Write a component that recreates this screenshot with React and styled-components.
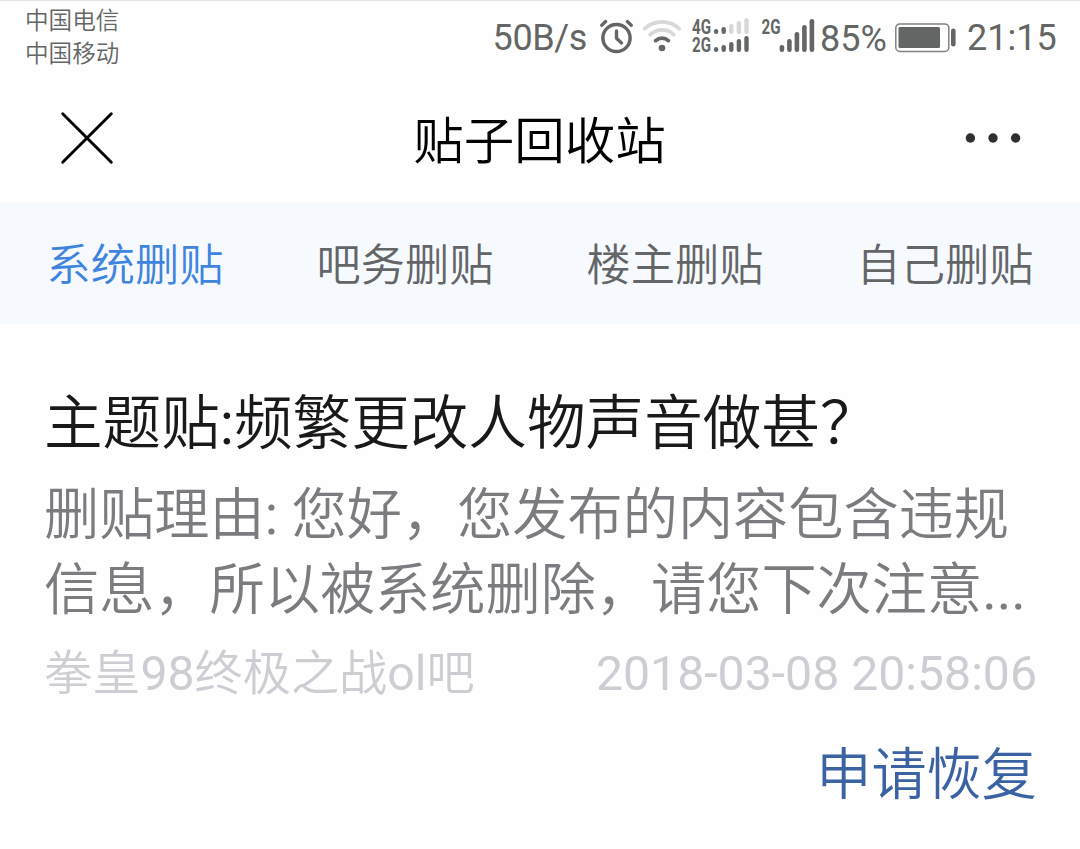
import React, { useState } from 'react'
import styled, { createGlobalStyle } from 'styled-components'

const tabs = ['系统删贴', '吧务删贴', '楼主删贴', '自己删贴']

const posts = [
	{
		id: 1,
		title: '主题贴:频繁更改人物声音做甚？',
		reason: ['删贴理由: 您好，您发布的内容包含违规', '信息，所以被系统删除，请您下次注意...'],
		forum: '拳皇98终极之战ol吧',
		date: '2018-03-08 20:58:06',
	},
]

const AlarmIcon = () => (
	<svg width="34" height="36" viewBox="0 0 34 36" fill="none" stroke="#646665" strokeLinecap="round">
		<circle cx="16.5" cy="19" r="13.6" strokeWidth="3.5" />
		<path d="M16.5 12v7.3l5 4.6" strokeWidth="3.4" strokeLinejoin="round" />
		<path d="M1.7 6.2l4-3.6M31.3 6.2l-4-3.6" strokeWidth="3.4" />
	</svg>
)

const WifiIcon = () => (
	<svg width="40" height="36" viewBox="0 0 40 36" fill="none" strokeLinecap="round" strokeWidth="3.8">
		<path d="M2.8 9.6a25.5 25.5 0 0 1 34.4 0" stroke="#d8d8d8" />
		<path d="M8.3 15.6a17 17 0 0 1 23.4 0" stroke="#d8d8d8" />
		<path d="M13.7 21.6a9.3 9.3 0 0 1 12.6 0" stroke="#646665" />
		<circle cx="20" cy="29" r="3.3" fill="#646665" />
	</svg>
)

const Bars = ({ x, step, bottom, heights, lit = 5, width = 4.4 }) =>
	heights.map((height, i) => (
		<rect
			key={i}
			x={x + i * step}
			y={bottom - height}
			width={width}
			height={height}
			rx={width / 2}
			fill={i < lit ? '#646665' : '#d8d8d8'}
		/>
	))

const DualSignal = () => (
	<svg width="60" height="40" viewBox="0 0 60 40">
		<NetworkLabel x="1" y="16.5" textLength="19" lengthAdjust="spacingAndGlyphs">4G</NetworkLabel>
		<NetworkLabel x="1" y="34.5" textLength="19" lengthAdjust="spacingAndGlyphs">2G</NetworkLabel>
		<Bars x={22.9} step={7.6} bottom={17} heights={[5, 7, 10, 13, 16]} lit={2} />
		<Bars x={22.9} step={7.6} bottom={35} heights={[5, 7, 10, 13, 16]} />
	</svg>
)

const SingleSignal = () => (
	<svg width="56" height="40" viewBox="0 0 56 40">
		<NetworkLabel x="0.5" y="16.5" textLength="19" lengthAdjust="spacingAndGlyphs">2G</NetworkLabel>
		<Bars x={18.6} step={7.5} bottom={35} heights={[7, 13, 20, 27, 33]} width={4.6} />
	</svg>
)

const BatteryIcon = () => (
	<svg width="62" height="30" viewBox="0 0 62 30">
		<rect x="0.8" y="0.9" width="53" height="27.6" rx="4" fill="none" stroke="#808281" strokeWidth="1.5" />
		<rect x="3.5" y="4" width="41.5" height="21" rx="1.5" fill="#646665" />
		<rect x="56" y="5.5" width="4.6" height="18" rx="2.2" fill="#646665" />
	</svg>
)

const CloseIcon = () => (
	<svg width="54" height="54" viewBox="0 0 54 54" stroke="#000" strokeWidth="2.9" strokeLinecap="round">
		<path d="M2.7 2.7l48.6 48.6M51.3 2.7L2.7 51.3" />
	</svg>
)

const MoreIcon = () => (
	<svg width="56" height="12" viewBox="0 0 56 12" fill="#303030">
		<circle cx="5.4" cy="6" r="4.7" />
		<circle cx="28" cy="6" r="4.7" />
		<circle cx="50.6" cy="6" r="4.7" />
	</svg>
)

// latin runs are set one step heavier than the chinese around them
const Mixed = ({ children }) =>
	children.split(/([\x21-\x7e]+)/).map((part, i) => i % 2 ? <Latin key={i}>{part}</Latin> : part)

export default function App() {
	const [active, setActive] = useState(0)

	return (
		<Page>
			<GlobalStyle />
			<StatusBar>
				<Carriers>
					<div>中国电信</div>
					<div>中国移动</div>
				</Carriers>
				<Indicators>
					<Speed>50B/s</Speed>
					<Slot left={0} raise={2.6}><AlarmIcon /></Slot>
					<Slot left={8} raise={2.6}><WifiIcon /></Slot>
					<Slot left={9} raise={2.6}><DualSignal /></Slot>
					<Slot left={10} raise={2.6}><SingleSignal /></Slot>
					<Slot left={3} lower={2}><StatusText width={75}>85%</StatusText></Slot>
					<BatteryIcon />
					<Slot left={10}><StatusText width={90}>21:15</StatusText></Slot>
				</Indicators>
			</StatusBar>
			<Header>
				<IconButton aria-label="关闭"><CloseIcon /></IconButton>
				<HeaderTitle>贴子回收站</HeaderTitle>
				<IconButton aria-label="更多"><MoreIcon /></IconButton>
			</Header>
			<TabBar>
				{tabs.map((tab, key) => (
					<Tab key={key} $active={key === active} onClick={() => setActive(key)}>{tab}</Tab>
				))}
			</TabBar>
			{posts.map((post) => (
				<Post key={post.id}>
					<PostTitle><Mixed>{post.title}</Mixed></PostTitle>
					<Reason>
						{post.reason.map((line, key) => <div key={key}><Mixed>{line}</Mixed></div>)}
					</Reason>
					<PostInfo>
						<span><Mixed>{post.forum}</Mixed></span>
						<Latin>{post.date}</Latin>
					</PostInfo>
					<RestoreButton>申请恢复</RestoreButton>
				</Post>
			))}
		</Page>
	)
}

const GlobalStyle = createGlobalStyle`
	* {
		box-sizing: border-box;
	}
	body {
		margin: 0;
		background: #fefefe;
		font-family: Roboto, 'Noto Sans CJK SC', sans-serif;
		font-weight: 350;
	}
	svg {
		display: block;
		flex: none;
		overflow: visible;
	}
	button {
		border: none;
		padding: 0;
		background: none;
		font-family: inherit;
		font-weight: inherit;
		cursor: pointer;
	}
`

const Page = styled.div`
	width: 1080px;
	height: 849px;
	overflow: hidden;
	border-top: 1px solid #e4e4e4;
	white-space: nowrap;
`

const Latin = styled.span`
	font-weight: 400;
`

const StatusBar = styled.div`
	display: flex;
	justify-content: space-between;
	height: 74px;
	padding: 4px 23px 0 25px;
	color: #646665;
`

const Carriers = styled.div`
	font-size: 23.6px;
	line-height: 33px;
`

const Indicators = styled.div`
	display: flex;
	align-items: center;
	height: 66px;
`

const Slot = styled.div`
	margin-left: ${props => props.left}px;
	padding-top: ${props => props.lower || 0}px;
	padding-bottom: ${props => props.raise || 0}px;
`

const StatusText = styled.div`
	width: ${props => props.width}px;
	font-size: 36px;
	font-weight: 400;
	line-height: 40px;
`

const Speed = styled(StatusText)`
	width: 107.5px;
	letter-spacing: -0.35px;
`

const NetworkLabel = styled.text`
	fill: #646665;
	font-size: 20px;
	font-weight: 700;
`

const Header = styled.div`
	display: flex;
	align-items: center;
	justify-content: space-between;
	height: 128px;
	padding: 0 59px 3px 60px;
`

const HeaderTitle = styled.div`
	padding: 9px 2px 0 0;
	color: #000;
	font-size: 50.5px;
	line-height: 60px;
`

const IconButton = styled.button`
	display: flex;
	align-items: center;
	width: 56px;
	height: 56px;
`

const TabBar = styled.div`
	display: grid;
	grid-template-columns: repeat(4, 1fr);
	height: 121px;
	padding-top: 5px;
	background: #f6faff;
`

const Tab = styled.button`
	color: ${props => props.$active ? '#3f84de' : '#646566'};
	font-size: 44.2px;
	line-height: 60px;
`

const Post = styled.div`
	display: flex;
	flex-direction: column;
	padding: 60px 43px 0 44px;
`

const PostTitle = styled.div`
	color: #181a1a;
	font-size: 58.6px;
	line-height: 80px;
`

const Reason = styled.div`
	margin-top: 14px;
	color: #7b7c80;
	font-size: 55.2px;
	line-height: 75px;
`

const PostInfo = styled.div`
	display: flex;
	justify-content: space-between;
	margin-top: 16px;
	color: #cdcdd4;
	font-size: 48.2px;
	line-height: 60px;
`

const RestoreButton = styled.button`
	align-self: flex-end;
	margin-top: 36px;
	color: #3b62a3;
	font-size: 55.2px;
	line-height: 70px;
`
